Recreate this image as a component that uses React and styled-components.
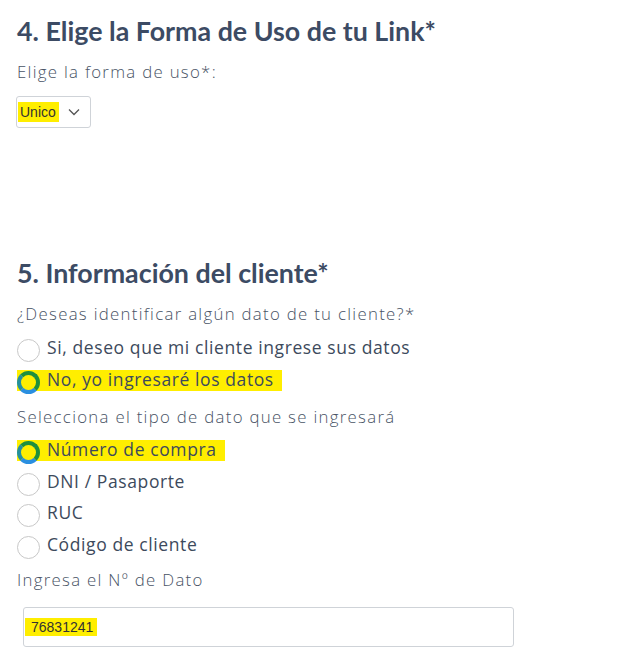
import React from "react";
import styled, { createGlobalStyle } from "styled-components";

const GlobalStyle = createGlobalStyle`
  html, body {
    margin: 0;
    padding: 0;
    background: #ffffff;
  }
  body {
    font-family: 'Open Sans', 'Noto Sans', sans-serif;
  }
`;

const Page = styled.div`
  padding: 14px 0 0 17px;
  width: 626px;
  box-sizing: border-box;
`;

const Heading = styled.h2`
  margin: 0;
  font: bold 26.8px/34px 'Lato', sans-serif;
  color: #3c4b64;
`;

const Label = styled.p`
  margin: ${p => p.$top || 0}px 0 0;
  font: 300 16.8px/24px 'Open Sans', sans-serif;
  color: #485365;
  letter-spacing: 1.3px;
`;

const Mark = styled.span`
  background: #ffee00;
  padding: 1px 3px 1px 2px;
`;

const SelectBox = styled.div`
  margin: 12px 0 128px -1px;
  width: 75px;
  height: 32px;
  box-sizing: border-box;
  border: 1px solid #cfd3d8;
  border-radius: 3px;
  display: flex;
  align-items: center;
  justify-content: space-between;
  padding: 0 10px 0 1px;
  font: 14px/18px 'Liberation Sans', sans-serif;
  color: #333;
`;

const Chevron = () => (
  <svg width="12" height="8" viewBox="0 0 12 8">
    <path d="M1 1.5 L6 6.5 L11 1.5" fill="none" stroke="#555" strokeWidth="1.3" />
  </svg>
);

const RadioList = styled.div`
  display: flex;
  flex-direction: column;
  margin-top: ${p => p.$top || 0}px;
`;

const RadioRow = styled.div`
  display: flex;
  align-items: flex-start;
  height: 31.5px;
`;

const RadioLine = styled.label`
  display: inline-flex;
  align-items: flex-start;
  height: 21px;
  padding-right: 8px;
  background: ${p => (p.$marked ? "#ffee00" : "transparent")};
  font: 17.5px/19px 'Open Sans', sans-serif;
  letter-spacing: 0.6px;
  color: #3d4a5c;
`;

const RadioCircle = styled.span`
  width: 23px;
  height: 23px;
  box-sizing: border-box;
  border-radius: 50%;
  border: 1.5px solid #c8c8c8;
  background: #fff;
  margin: 1px 7px 0 0;
  flex-shrink: 0;
  ${p => p.$checked && `
    border: 4px solid #1f8f3d;
    border-bottom-color: #2a8fe0;
    border-left-color: #2590a0;
    background: #ffee00;
  `}
`;

const InputBox = styled.div`
  margin: 15px 0 0 6px;
  width: 491px;
  height: 40px;
  box-sizing: border-box;
  border: 1px solid #cfd3d8;
  border-radius: 3px;
  display: flex;
  align-items: center;
  padding: 0 0 0 1px;
  font: 14px/18px 'Liberation Sans', sans-serif;
  color: #333;
`;

const InputValue = styled.span`
  background: #ffee00;
  padding: 0 4px 0 6px;
`;

const Radio = ({ label, checked }) => (
  <RadioRow>
    <RadioLine $marked={checked}>
      <RadioCircle $checked={checked} />
      {label}
    </RadioLine>
  </RadioRow>
);

const App = () => (
  <Page>
    <GlobalStyle />
    <Heading>4. Elige la Forma de Uso de tu Link*</Heading>
    <Label $top={12}>Elige la forma de uso*:</Label>
    <SelectBox>
      <Mark>Unico</Mark>
      <Chevron />
    </SelectBox>

    <Heading>5. Información del cliente*</Heading>
    <Label $top={12}>¿Deseas identificar algún dato de tu cliente?*</Label>
    <RadioList $top={12}>
      <Radio label="Si, deseo que mi cliente ingrese sus datos" />
      <Radio label="No, yo ingresaré los datos" checked />
    </RadioList>
    <Label $top={4}>Selecciona el tipo de dato que se ingresará</Label>
    <RadioList $top={11}>
      <Radio label="Número de compra" checked />
      <Radio label="DNI / Pasaporte" />
      <Radio label="RUC" />
      <Radio label="Código de cliente" />
    </RadioList>
    <Label $top={2}>Ingresa el Nº de Dato</Label>
    <InputBox>
      <InputValue>76831241</InputValue>
    </InputBox>
  </Page>
);

export default App;
